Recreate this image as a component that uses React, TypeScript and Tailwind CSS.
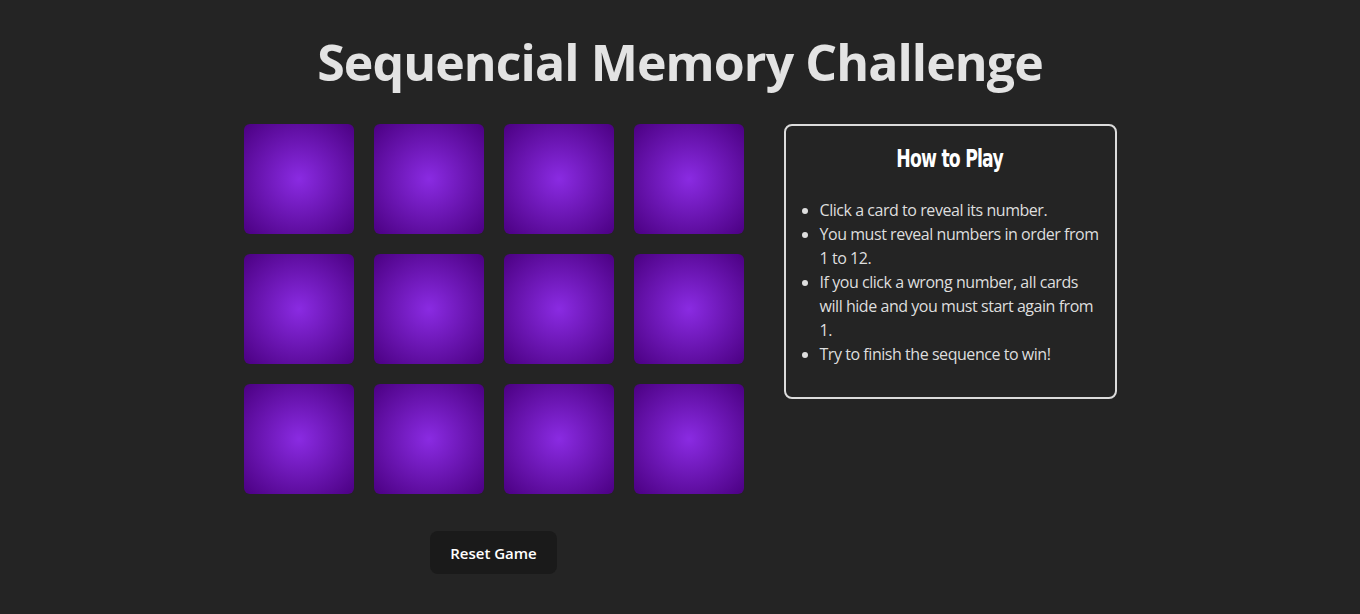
const RULES = [
  "Click a card to reveal its number.",
  "You must reveal numbers in order from 1 to 12.",
  "If you click a wrong number, all cards will hide and you must start again from 1.",
  "Try to finish the sequence to win!",
];

function Card() {
  return (
    <div className="h-[110px] w-[110px] cursor-pointer rounded-[6px] bg-[radial-gradient(circle,#8a2be2,#4b0082)]" />
  );
}

export default function App() {
  const cards = Array.from({ length: 12 }, (_, i) => i);

  return (
    <div className="flex min-h-screen flex-col items-center bg-[#242424] font-['Open_Sans',sans-serif] text-[#dedede]">
      <h1 className="mt-[34px] text-[50px] font-bold leading-[56px] tracking-[-0.9px] text-[#e3e3e3]">
        Sequencial Memory Challenge
      </h1>

      <div className="mt-[34px] flex items-start gap-[40px]">
        <div className="flex flex-col items-center">
          <div className="grid grid-cols-4 gap-5">
            {cards.map((i) => (
              <Card key={i} />
            ))}
          </div>
          <button className="mt-[37px] rounded-lg border border-transparent bg-[#1a1a1a] px-[19px] py-[8.5px] text-[15px] font-semibold leading-6 text-white">
            Reset Game
          </button>
        </div>

        <div className="w-[333px] rounded-lg border-2 border-[#dcdcdc] pt-[17px] pr-[12px] pb-[17px] pl-4">
          <h2 className="pr-[4px] text-center text-[24px] leading-[30px] text-white">
            <span className="inline-block scale-x-[0.8] font-['DejaVu_Sans',sans-serif] font-bold tracking-[-1px] font-stretch-condensed">
              How to Play
            </span>
          </h2>
          <ul className="mt-6 mb-[14px] list-disc pl-[18px] text-base leading-6 tracking-[-0.45px]">
            {RULES.map((r) => (
              <li key={r}>{r}</li>
            ))}
          </ul>
        </div>
      </div>
    </div>
  );
}
